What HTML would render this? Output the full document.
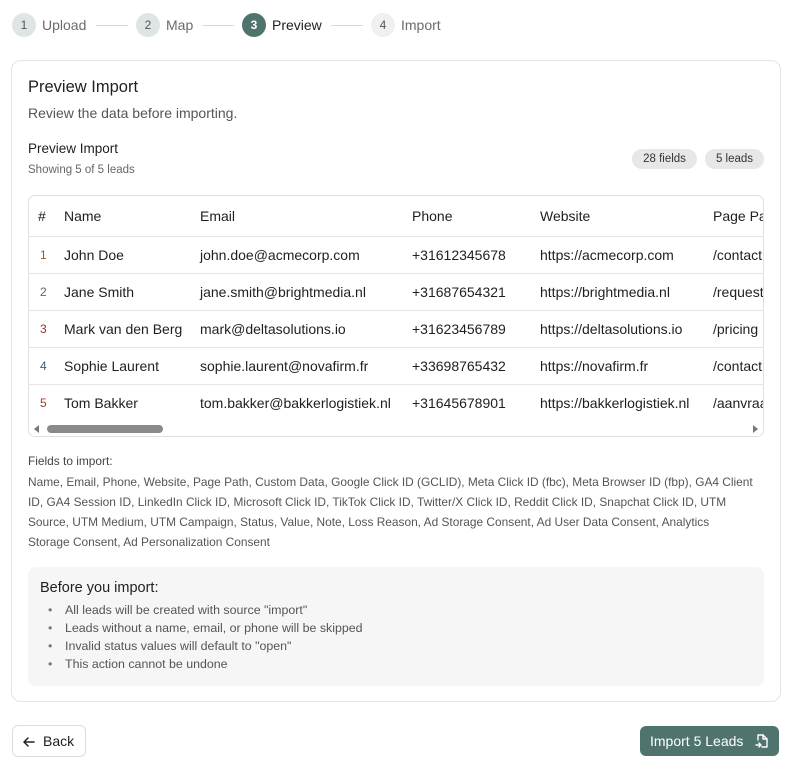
<!DOCTYPE html>
<html><head><meta charset="utf-8"><style>
*{box-sizing:border-box;margin:0;padding:0}
body{width:810px;height:784px;background:#fff;font-family:"Liberation Sans",sans-serif;color:#1f1f1f;position:relative;overflow:hidden}
.a{position:absolute;white-space:nowrap}
.circ{position:absolute;width:24px;height:24px;border-radius:50%;font-size:12px;text-align:center;line-height:24px}
.line{position:absolute;height:1px;background:#d9d9d9;top:25px}
.step{font-size:14px;color:#6b6b6b;top:17px}
.card{position:absolute;left:11px;top:60px;width:770px;height:642px;border:1px solid #e3e3e3;border-radius:10px}
.badge{position:absolute;top:149px;height:20px;border-radius:10px;background:#e7e7e7;font-size:11.5px;color:#333;line-height:20px;text-align:center}
.tbl{position:absolute;left:28px;top:195px;width:736px;height:242px;border:1px solid #e0e0e0;border-radius:7px;overflow:hidden}
.row{position:absolute;left:0;width:736px;height:37px;border-top:1px solid #e6e6e6;font-size:14px}
.row span{position:absolute;top:10px;white-space:nowrap}
.fld{font-size:11.9px;color:#555;line-height:20px}
.note{position:absolute;left:28px;top:567px;width:736px;height:119px;background:#f6f6f6;border-radius:8px}
.note li{font-size:12.4px;color:#555;line-height:18px;list-style:none;position:relative;padding-left:37px}
.note li:before{content:"•";position:absolute;left:20px;color:#777}
.btn{position:absolute;border-radius:6px;font-size:14px}
</style></head><body>
<div class="circ" style="left:12px;top:13px;background:#dfe5e4;color:#555">1</div>
<div class="a step" style="left:42px">Upload</div>
<div class="line" style="left:96px;width:32px"></div>
<div class="circ" style="left:136px;top:13px;background:#dfe5e4;color:#555">2</div>
<div class="a step" style="left:166px">Map</div>
<div class="line" style="left:202px;width:32px"></div>
<div class="circ" style="left:242px;top:13px;background:#4e746d;color:#fff;font-weight:bold">3</div>
<div class="a step" style="left:272px;color:#1f1f1f">Preview</div>
<div class="line" style="left:331px;width:32px"></div>
<div class="circ" style="left:371px;top:13px;background:#f0f0f0;color:#555">4</div>
<div class="a step" style="left:401px">Import</div>

<div class="card"></div>
<div class="a" style="left:28px;top:78px;font-size:16.5px;color:#1f1f1f">Preview Import</div>
<div class="a" style="left:28px;top:105px;font-size:14px;color:#555">Review the data before importing.</div>
<div class="a" style="left:28px;top:141px;font-size:13.5px;color:#1f1f1f">Preview Import</div>
<div class="a" style="left:28px;top:164px;font-size:11.5px;color:#666">Showing 5 of 5 leads</div>
<div class="badge" style="left:632px;width:65px">28 fields</div>
<div class="badge" style="left:705px;width:59px">5 leads</div>

<div class="tbl">
 <div class="row" style="top:0;border-top:none;height:40px"><span style="left:9px;top:12px">#</span><span style="left:35px;top:12px">Name</span><span style="left:171px;top:12px">Email</span><span style="left:383px;top:12px">Phone</span><span style="left:511px;top:12px">Website</span><span style="left:684px;top:12px">Page Path</span></div>
 <div class="row" style="top:40px"><span style="left:11px;color:#a0522d;font-size:12px;top:11px">1</span><span style="left:35px">John Doe</span><span style="left:171px">john.doe@acmecorp.com</span><span style="left:383px">+31612345678</span><span style="left:511px">https://acmecorp.com</span><span style="left:684px">/contact</span></div>
 <div class="row" style="top:77px"><span style="left:11px;color:#666;font-size:12px;top:11px">2</span><span style="left:35px">Jane Smith</span><span style="left:171px">jane.smith@brightmedia.nl</span><span style="left:383px">+31687654321</span><span style="left:511px">https://brightmedia.nl</span><span style="left:684px">/request</span></div>
 <div class="row" style="top:114px"><span style="left:11px;color:#8b3a2a;font-size:12px;top:11px">3</span><span style="left:35px">Mark van den Berg</span><span style="left:171px">mark@deltasolutions.io</span><span style="left:383px">+31623456789</span><span style="left:511px">https://deltasolutions.io</span><span style="left:684px">/pricing</span></div>
 <div class="row" style="top:151px"><span style="left:11px;color:#3a5a8b;font-size:12px;top:11px">4</span><span style="left:35px">Sophie Laurent</span><span style="left:171px">sophie.laurent@novafirm.fr</span><span style="left:383px">+33698765432</span><span style="left:511px">https://novafirm.fr</span><span style="left:684px">/contact</span></div>
 <div class="row" style="top:188px"><span style="left:11px;color:#a0402d;font-size:12px;top:11px">5</span><span style="left:35px">Tom Bakker</span><span style="left:171px">tom.bakker@bakkerlogistiek.nl</span><span style="left:383px">+31645678901</span><span style="left:511px">https://bakkerlogistiek.nl</span><span style="left:684px">/aanvraag</span></div>
 <div style="position:absolute;left:0;top:224px;width:736px;height:18px;background:#fff"></div>
 <div style="position:absolute;left:5px;top:229px;width:0;height:0;border-top:4px solid transparent;border-bottom:4px solid transparent;border-right:5px solid #777"></div>
 <div style="position:absolute;left:18px;top:229px;width:116px;height:8px;border-radius:4px;background:#8a8a8a"></div>
 <div style="position:absolute;left:724px;top:229px;width:0;height:0;border-top:4px solid transparent;border-bottom:4px solid transparent;border-left:5px solid #777"></div>
</div>

<div class="a fld" style="left:28px;top:451px;color:#444">Fields to import:</div>
<div class="a fld" style="left:28px;top:472px">Name, Email, Phone, Website, Page Path, Custom Data, Google Click ID (GCLID), Meta Click ID (fbc), Meta Browser ID (fbp), GA4 Client<br>ID, GA4 Session ID, LinkedIn Click ID, Microsoft Click ID, TikTok Click ID, Twitter/X Click ID, Reddit Click ID, Snapchat Click ID, UTM<br>Source, UTM Medium, UTM Campaign, Status, Value, Note, Loss Reason, Ad Storage Consent, Ad User Data Consent, Analytics<br>Storage Consent, Ad Personalization Consent</div>

<div class="note">
 <div class="a" style="left:12px;top:13px;font-size:14.5px;color:#1f1f1f">Before you import:</div>
 <ul style="position:absolute;left:0;top:34px">
  <li>All leads will be created with source "import"</li>
  <li>Leads without a name, email, or phone will be skipped</li>
  <li>Invalid status values will default to "open"</li>
  <li>This action cannot be undone</li>
 </ul>
</div>

<div class="btn" style="left:12px;top:725px;width:74px;height:32px;border:1px solid #dcdcdc">
 <svg style="position:absolute;left:9px;top:9px" width="14" height="14" viewBox="0 0 14 14" fill="none" stroke="#222" stroke-width="1.5" stroke-linecap="round" stroke-linejoin="round"><path d="M12 7H2M6 3L2 7l4 4"/></svg>
 <span class="a" style="left:30px;top:7px;color:#1f1f1f">Back</span>
</div>
<div class="btn" style="left:640px;top:726px;width:139px;height:30px;background:#4e746d;color:#fff">
 <span class="a" style="left:10px;top:7px">Import 5 Leads</span>
 <svg style="position:absolute;left:115px;top:7px" width="14" height="16" viewBox="0 0 14 16" fill="none" stroke="#fff" stroke-width="1.4" stroke-linecap="round" stroke-linejoin="round"><path d="M3 7V2h5l4 4v8H7"/><path d="M8 2v4h4"/><path d="M1 12h5M4 10l2 2-2 2"/></svg>
</div>
</body></html>
